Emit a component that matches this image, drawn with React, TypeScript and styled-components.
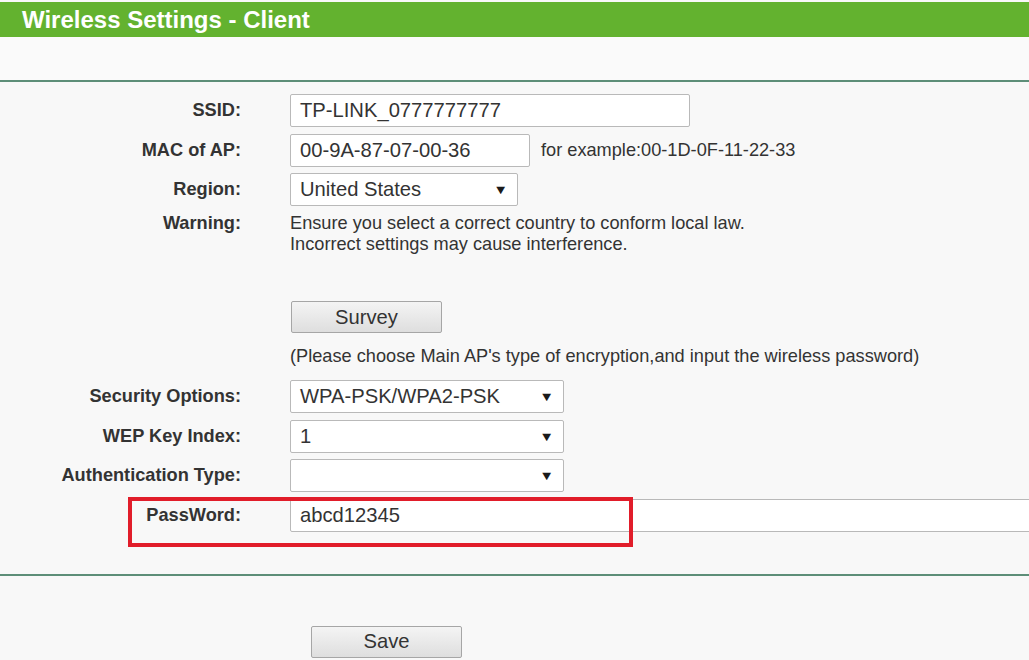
import React from "react";
import styled, { createGlobalStyle } from "styled-components";

const GlobalStyle = createGlobalStyle`
  html, body {
    margin: 0;
    padding: 0;
    background: #f8f8f8;
    font-family: "Liberation Sans", Arial, sans-serif;
    color: #333;
    overflow: hidden;
  }
`;

const Page = styled.div`
  width: 1029px;
  height: 660px;
  position: relative;
  overflow: hidden;
  background: #f8f8f8;
`;

const Header = styled.div`
  height: 35px;
  margin-top: 2px;
  background: #63b22f;
  display: flex;
  align-items: center;
  padding-left: 22px;
  color: #fff;
  font-size: 24px;
  font-weight: bold;
`;

const TopGap = styled.div`
  height: 43px;
  background: #fafafa;
`;

const Divider = styled.div`
  height: 2px;
  background: #5d8e78;
`;

const Form = styled.div<{ $top: number }>`
  display: flex;
  flex-direction: column;
  padding-top: ${(p) => p.$top}px;
`;

const Row = styled.div<{ $mt?: number; $align?: string }>`
  display: grid;
  grid-template-columns: 241px 1fr;
  column-gap: 49px;
  align-items: ${(p) => p.$align || "center"};
  margin-top: ${(p) => p.$mt ?? 6.5}px;
`;

const Label = styled.div`
  text-align: right;
  font-size: 18.2px;
  font-weight: bold;
  color: #333;
  line-height: 21px;
`;

const Field = styled.div`
  display: flex;
  align-items: center;
  gap: 11px;
`;

const TextBox = styled.div<{ $w: number }>`
  box-sizing: border-box;
  width: ${(p) => p.$w}px;
  height: 33px;
  background: #fff;
  border: 1px solid #b9b9b9;
  border-radius: 2px;
  padding-left: 9px;
  display: flex;
  align-items: center;
  font-size: 20.2px;
  color: #333;
  white-space: nowrap;
  flex-shrink: 0;
`;

const SelectBox = styled(TextBox)`
  justify-content: space-between;
  padding-right: 9px;
`;

const Arrow = styled.span`
  font-size: 15px;
  color: #1a1a1a;
  transform: scaleY(0.85);
`;

const Hint = styled.span`
  font-size: 18.2px;
  color: #333;
`;

const Note = styled.div`
  font-size: 18.2px;
  line-height: 21px;
  color: #333;
  white-space: nowrap;
`;

const Button = styled.div<{ $ml?: number }>`
  box-sizing: border-box;
  width: 151px;
  height: 32px;
  margin-left: ${(p) => p.$ml ?? 1}px;
  border: 1px solid #a6a6a6;
  border-radius: 2px;
  background: linear-gradient(#f4f4f4, #dedede);
  display: flex;
  align-items: center;
  justify-content: center;
  font-size: 20.2px;
  color: #333;
`;

const Spacer = styled.div<{ $h: number }>`
  height: ${(p) => p.$h}px;
`;

const SaveWrap = styled.div`
  padding-left: 311px;
`;

const Highlight = styled.div`
  position: absolute;
  left: 128px;
  top: 497px;
  width: 505px;
  height: 50px;
  box-sizing: border-box;
  border: 4px solid #e11d2a;
  pointer-events: none;
`;

const Select = ({ w, value }: { w: number; value: string }) => (
  <SelectBox $w={w}>
    <span>{value}</span>
    <Arrow>▼</Arrow>
  </SelectBox>
);

export default function App() {
  return (
    <Page>
      <GlobalStyle />
      <Header>Wireless Settings - Client</Header>
      <TopGap />
      <Divider />
      <Form $top={12}>
        <Row $mt={0}>
          <Label>SSID:</Label>
          <Field>
            <TextBox $w={400}>TP-LINK_0777777777</TextBox>
          </Field>
        </Row>
        <Row>
          <Label>MAC of AP:</Label>
          <Field>
            <TextBox $w={240}>00-9A-87-07-00-36</TextBox>
            <Hint>for example:00-1D-0F-11-22-33</Hint>
          </Field>
        </Row>
        <Row>
          <Label>Region:</Label>
          <Field>
            <Select w={228} value="United States" />
          </Field>
        </Row>
        <Row $mt={7} $align="start">
          <Label>Warning:</Label>
          <Note>
            Ensure you select a correct country to conform local law.
            <br />
            Incorrect settings may cause interference.
          </Note>
        </Row>
        <Row $mt={46}>
          <span />
          <Button>Survey</Button>
        </Row>
        <Row $mt={13}>
          <span />
          <Note>(Please choose Main AP's type of encryption,and input the wireless password)</Note>
        </Row>
        <Row $mt={13}>
          <Label>Security Options:</Label>
          <Field>
            <Select w={274} value="WPA-PSK/WPA2-PSK" />
          </Field>
        </Row>
        <Row>
          <Label>WEP Key Index:</Label>
          <Field>
            <Select w={274} value="1" />
          </Field>
        </Row>
        <Row>
          <Label>Authentication Type:</Label>
          <Field>
            <Select w={274} value="" />
          </Field>
        </Row>
        <Row>
          <Label>PassWord:</Label>
          <Field>
            <TextBox $w={800}>abcd12345</TextBox>
          </Field>
        </Row>
      </Form>
      <Spacer $h={42} />
      <Divider />
      <Spacer $h={50} />
      <SaveWrap>
        <Button $ml={0}>Save</Button>
      </SaveWrap>
      <Highlight />
    </Page>
  );
}
